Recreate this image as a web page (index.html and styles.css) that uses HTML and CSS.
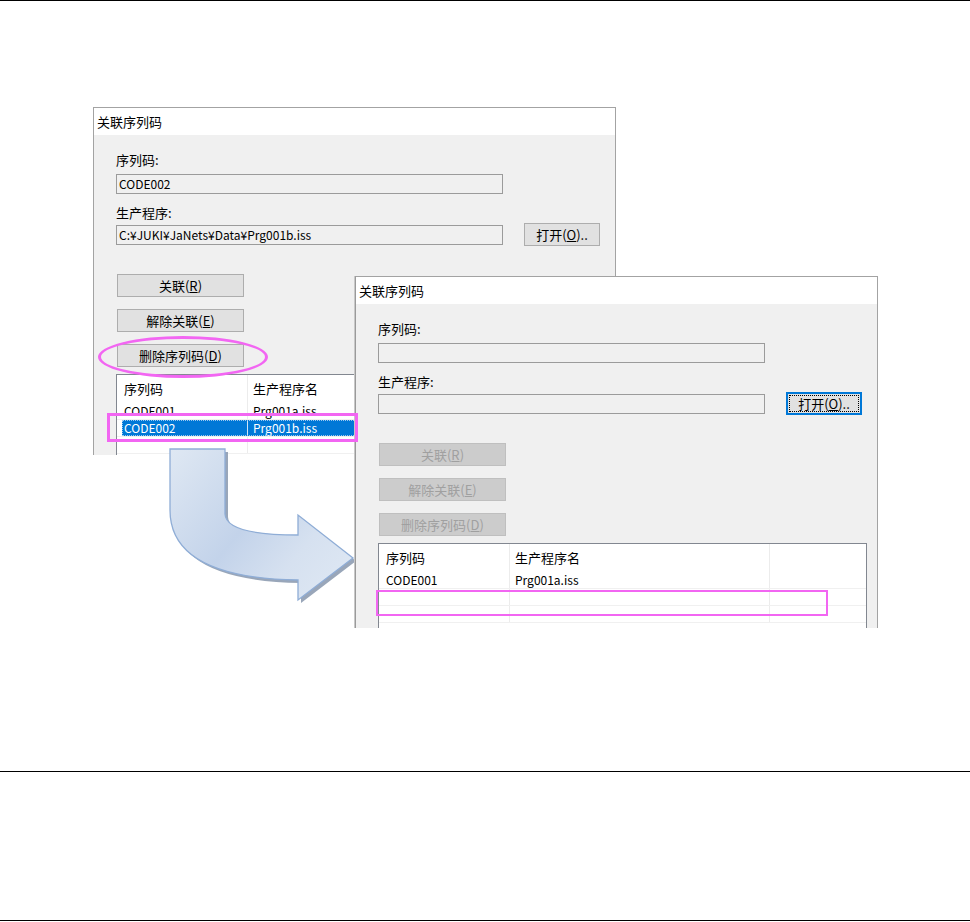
FILE: index.html
```html
<!DOCTYPE html>
<html lang="zh">
<head>
<meta charset="utf-8">
<title>关联序列码</title>
<link rel="stylesheet" href="styles.css">
</head>
<body>
<div class="rule"></div>
<div class="figure">
  <div class="dialog dialog-before">
    <div class="titlebar">关联序列码</div>
    <div class="dlg-body">
      <div class="label label-first">序列码:</div>
      <div class="field-row"><div class="textbox latin">CODE002</div></div>
      <div class="label">生产程序:</div>
      <div class="field-row"><div class="textbox latin">C:¥JUKI¥JaNets¥Data¥Prg001b.iss</div><div class="btn btn-open">打开(<u>O</u>)..</div></div>
      <div class="btn-col">
        <div class="btn">关联(<u>R</u>)</div>
        <div class="btn">解除关联(<u>E</u>)</div>
        <div class="btn">删除序列码(<u>D</u>)</div>
      </div>
      <div class="listview">
        <div class="lv-row lv-head"><div class="cells"><div class="c1">序列码</div><div class="c2">生产程序名</div><div class="c3"></div></div></div>
        <div class="lv-row"><div class="cells"><div class="c1 latin">CODE001</div><div class="c2 latin">Prg001a.iss</div><div class="c3"></div></div></div>
        <div class="lv-row selected"><div class="cells"><div class="c1 latin">CODE002</div><div class="c2 latin">Prg001b.iss</div><div class="c3"></div></div></div>
        <div class="lv-row"><div class="cells"><div class="c1"></div><div class="c2"></div><div class="c3"></div></div></div>
      </div>
    </div>
  </div>

  <svg class="arrow" width="970" height="770" viewBox="0 1 970 770" xmlns="http://www.w3.org/2000/svg">
    <defs>
      <linearGradient id="ag" x1="170" y1="449" x2="353" y2="600" gradientUnits="userSpaceOnUse">
        <stop offset="0" stop-color="#dfe8f3"/>
        <stop offset="0.45" stop-color="#c3d3ea"/>
        <stop offset="0.7" stop-color="#d6e1f0"/>
        <stop offset="1" stop-color="#e0e9f4"/>
      </linearGradient>
    </defs>
    <path d="M170,449 L225,449 L225,514 Q226,535 298,535 L298,515 L353,558 L298,600 L298,580 Q170,578 170,510 Z" fill="#8796ad" transform="translate(3,3)" opacity="0.85"/>
    <path d="M170,449 L225,449 L225,514 Q226,535 298,535 L298,515 L353,558 L298,600 L298,580 Q170,578 170,510 Z" fill="url(#ag)" stroke="#8fadd6" stroke-width="1.3"/>
  </svg>

  <div class="dialog dialog-after">
    <div class="titlebar">关联序列码</div>
    <div class="dlg-body">
      <div class="label label-first">序列码:</div>
      <div class="field-row"><div class="textbox"></div></div>
      <div class="label">生产程序:</div>
      <div class="field-row"><div class="textbox"></div><div class="btn btn-open focused">打开(<u>O</u>)..</div></div>
      <div class="btn-col">
        <div class="btn disabled">关联(<u>R</u>)</div>
        <div class="btn disabled">解除关联(<u>E</u>)</div>
        <div class="btn disabled">删除序列码(<u>D</u>)</div>
      </div>
      <div class="listview">
        <div class="lv-row lv-head"><div class="cells"><div class="c1">序列码</div><div class="c2">生产程序名</div><div class="c3"></div></div></div>
        <div class="lv-row"><div class="cells"><div class="c1 latin">CODE001</div><div class="c2 latin">Prg001a.iss</div><div class="c3"></div></div></div>
        <div class="lv-row"><div class="cells"><div class="c1"></div><div class="c2"></div><div class="c3"></div></div></div>
        <div class="lv-row"><div class="cells"><div class="c1"></div><div class="c2"></div><div class="c3"></div></div></div>
      </div>
    </div>
  </div>

  <div class="mark mark-ellipse"></div>
  <div class="mark mark-row-before"></div>
  <div class="mark mark-row-after"></div>
</div>
<div class="rule"></div>
<div class="blank"></div>
<div class="rule"></div>
</body>
</html>
```

FILE: styles.css
```css
html, body {
  margin: 0;
  padding: 0;
  background: #ffffff;
}

body {
  font-family: "Noto Sans CJK SC", "Noto Sans", sans-serif;
  width: 970px;
  height: 922px;
  overflow: hidden;
}

.rule {
  height: 1px;
  background: #000000;
}

.figure {
  position: relative;
  height: 770px;
}

.blank {
  height: 148px;
}

/* ---------- dialog windows ---------- */
.dialog {
  position: absolute;
  width: 523px;
  box-sizing: border-box;
  border: 1px solid #a3a3a3;
  border-bottom: none;
  background: #f0f0f0;
  overflow: hidden;
  font-family: "Noto Sans CJK SC", sans-serif;
  font-size: 13px;
  color: #000;
}

.dialog-before {
  left: 93px;
  top: 106px;
  height: 348px;
  z-index: 1;
}

.dialog-after {
  left: 355px;
  top: 275px;
  height: 352px;
  z-index: 3;
  border-left-color: #9a9a9a;
  box-shadow: -1px 0 0 #c8c8c8;
}

.titlebar {
  height: 27px;
  line-height: 27px;
  background: #ffffff;
  padding-left: 3px;
  white-space: nowrap;
}

.dlg-body {
  padding-left: 22px;
}

.label {
  height: 16px;
  line-height: 16px;
  margin-top: 10px;
}

.label-first {
  margin-top: 17px;
}

.field-row {
  display: flex;
  align-items: center;
  height: 23px;
  margin-top: 2px;
}

.label-first + .field-row {
  margin-top: 4px;
}

.textbox {
  width: 387px;
  height: 20px;
  box-sizing: border-box;
  border: 1px solid #9b9b9b;
  background: #f0f0f0;
  padding-left: 2px;
  line-height: 18px;
  white-space: nowrap;
  overflow: hidden;
}

.latin {
  font-size: 12px;
}

.btn {
  width: 127px;
  height: 23px;
  box-sizing: border-box;
  border: 1px solid #adadad;
  background: #e1e1e1;
  text-align: center;
  line-height: 21px;
  white-space: nowrap;
  margin-left: 1px;
}

.btn u {
  text-decoration-thickness: 1px;
  text-underline-offset: 1px;
}

.btn-open {
  width: 76px;
  margin-left: 21px;
}

.btn.focused {
  border-color: #0078d7;
  box-shadow: inset 0 0 0 1px #0078d7;
  outline: 1px dotted #000;
  outline-offset: -4px;
}

.btn.disabled {
  background: #cccccc;
  border-color: #bfbfbf;
  color: #a0a0a0;
}

.btn-col {
  display: flex;
  flex-direction: column;
  gap: 12px;
  margin-top: 28px;
}

/* ---------- list view ---------- */
.listview {
  width: 489px;
  height: 200px;
  box-sizing: border-box;
  margin-top: 7px;
  border: 1px solid #828790;
  border-bottom: none;
  background: #ffffff;
}

.lv-row {
  height: 17px;
  box-sizing: border-box;
  border-bottom: 1px solid #f0f0f0;
}

.lv-head {
  height: 28px;
  border-bottom: none;
}

.cells {
  display: flex;
  height: 100%;
  margin-left: 5px;
}

.cells > div {
  box-sizing: border-box;
  padding-left: 2px;
  white-space: nowrap;
  overflow: hidden;
  line-height: 16px;
}

.lv-head .cells > div {
  line-height: 28px;
}

.c1 {
  width: 126px;
  border-right: 1px solid #ececec;
}

.c2 {
  width: 260px;
  border-right: 1px solid #ececec;
  padding-left: 5px !important;
}

.c3 {
  flex: 1;
}

.selected .cells {
  background: #0078d7;
  color: #ffffff;
  outline: 1px dotted #9cc8f0;
  outline-offset: -1px;
}

.selected .c1,
.selected .c2 {
  border-right-color: #cfe4f7;
}

/* ---------- arrow & highlight marks ---------- */
.arrow {
  position: absolute;
  left: 0;
  top: 0;
  z-index: 2;
  pointer-events: none;
}

.mark {
  position: absolute;
  box-sizing: border-box;
  z-index: 4;
  pointer-events: none;
}

.mark-ellipse {
  left: 98px;
  top: 335px;
  width: 170px;
  height: 42px;
  border: 3px solid #f266f2;
  border-radius: 50%;
}

.mark-row-before {
  left: 107px;
  top: 412px;
  width: 251px;
  height: 29px;
  border: 3px solid #f266f2;
}

.mark-row-after {
  left: 376px;
  top: 589px;
  width: 452px;
  height: 26px;
  border: 2px solid #f266f2;
}
```
